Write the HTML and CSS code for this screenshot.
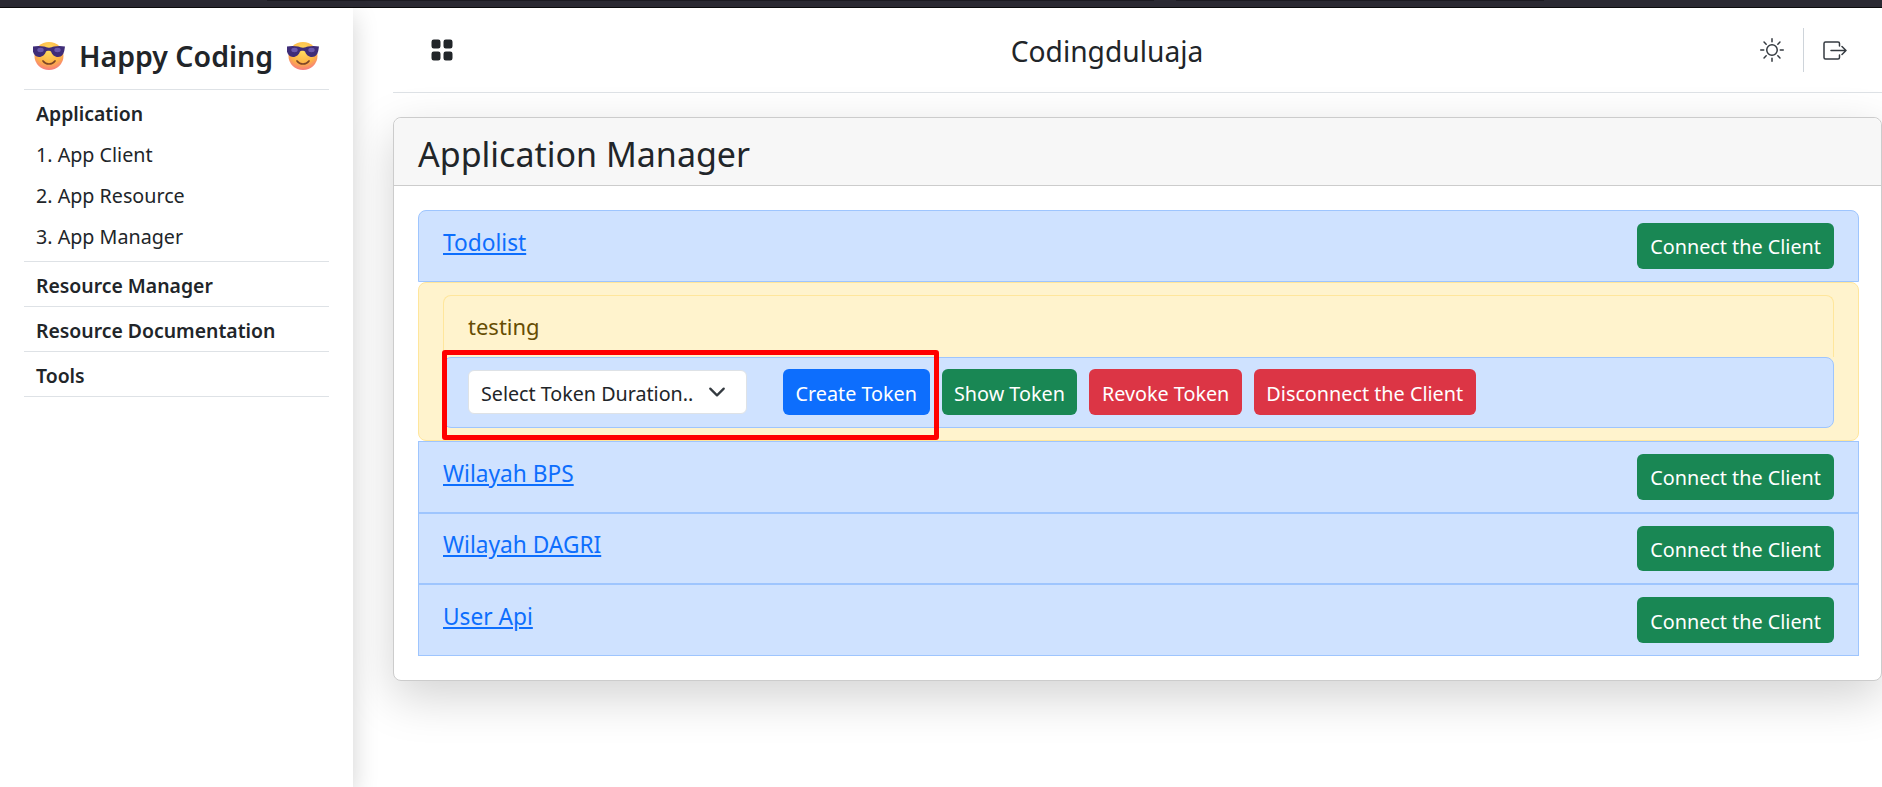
FILE: index.html
```html
<!DOCTYPE html>
<html lang="en">

<head>
    <meta charset="UTF-8">
    <title>Codingduluaja</title>
    <link rel="stylesheet" href="styles.css">
</head>

<body>
    <svg class="svg-defs" width="0" height="0">
        <defs>
            <radialGradient id="face-fill" cx="50%" cy="30%" r="75%">
                <stop offset="0" stop-color="#ffdf60"/>
                <stop offset="0.62" stop-color="#fdb245"/>
                <stop offset="1" stop-color="#f56f8c"/>
            </radialGradient>
            <symbol id="cool-face" viewBox="0 0 32 29">
                <ellipse cx="16" cy="15" rx="14.500" ry="14" fill="url(#face-fill)"/>
                <path d="M0 5.500c3-.8 8-.8 11 0 1.500.4 3 1.200 5 1.200s3.500-.8 5-1.200c3-.8 8-.8 11 0l-.5 3c-.5 4-2.500 7.500-6.500 7.500-3.500 0-6-2.500-7-5.500-.6-1-4.400-1-5 0-1 3-3.500 5.500-7 5.500-4 0-6-3.500-6.500-7.500z" fill="#3f2d78"/>
                <ellipse cx="7.500" cy="9" rx="3.200" ry="2.200" fill="#6a58ac"/>
                <ellipse cx="24.500" cy="9" rx="3.200" ry="2.200" fill="#6a58ac"/>
                <path d="M10 20c1.500 2 3.800 3 6 3s4.500-1 6-3" fill="none" stroke="#7d4526" stroke-width="1.700" stroke-linecap="round"/>
            </symbol>
        </defs>
    </svg>

    <div class="browser-strip">
        <span class="strip-tab strip-tab-long"></span>
        <span class="strip-tab strip-tab-short"></span>
    </div>

    <div class="layout">
        <aside class="sidebar">
            <div class="brand">
                <svg class="brand-emoji"><use href="#cool-face"/></svg>
                <span>Happy Coding</span>
                <svg class="brand-emoji"><use href="#cool-face"/></svg>
            </div>
            <nav>
                <div class="nav-group nav-group-open">
                    <a class="nav-title" href="#">Application</a>
                    <a class="nav-link" href="#">1. App Client</a>
                    <a class="nav-link" href="#">2. App Resource</a>
                    <a class="nav-link" href="#">3. App Manager</a>
                </div>
                <div class="nav-group"><a class="nav-title" href="#">Resource Manager</a></div>
                <div class="nav-group"><a class="nav-title" href="#">Resource Documentation</a></div>
                <div class="nav-group"><a class="nav-title" href="#">Tools</a></div>
            </nav>
        </aside>

        <main class="content">
            <header class="topbar">
                <svg class="icon-grid" viewBox="0 0 16 16" fill="#212529">
                    <path d="M1 2.500A1.500 1.500 0 0 1 2.500 1h3A1.500 1.500 0 0 1 7 2.500v3A1.500 1.500 0 0 1 5.500 7h-3A1.500 1.500 0 0 1 1 5.500zm8 0A1.500 1.500 0 0 1 10.500 1h3A1.500 1.500 0 0 1 15 2.500v3A1.500 1.500 0 0 1 13.500 7h-3A1.500 1.500 0 0 1 9 5.500zm-8 8A1.500 1.500 0 0 1 2.500 9h3A1.500 1.500 0 0 1 7 10.500v3A1.500 1.500 0 0 1 5.500 15h-3A1.500 1.500 0 0 1 1 13.500zm8 0A1.500 1.500 0 0 1 10.500 9h3a1.500 1.500 0 0 1 1.500 1.500v3a1.500 1.500 0 0 1-1.500 1.500h-3A1.500 1.500 0 0 1 9 13.500z"/>
                </svg>
                <div class="topbar-title">Codingduluaja</div>
                <div class="topbar-actions">
                    <svg class="icon-sun" viewBox="0 0 16 16" fill="#343a40">
                        <path d="M8 11a3 3 0 1 1 0-6 3 3 0 0 1 0 6m0 1a4 4 0 1 0 0-8 4 4 0 0 0 0 8M8 0a.500.500 0 0 1 .500.500v2a.500.500 0 0 1-1 0v-2A.500.500 0 0 1 8 0m0 13a.500.500 0 0 1 .500.500v2a.500.500 0 0 1-1 0v-2A.500.500 0 0 1 8 13m8-5a.500.500 0 0 1-.500.500h-2a.500.500 0 0 1 0-1h2a.500.500 0 0 1 .500.500M3 8a.500.500 0 0 1-.500.500h-2a.500.500 0 0 1 0-1h2A.500.500 0 0 1 3 8m10.657-5.657a.500.500 0 0 1 0 .707l-1.414 1.415a.500.500 0 1 1-.707-.708l1.414-1.414a.500.500 0 0 1 .707 0m-9.193 9.193a.500.500 0 0 1 0 .707L3.050 13.657a.500.500 0 0 1-.707-.707l1.414-1.414a.500.500 0 0 1 .707 0m9.193 2.121a.500.500 0 0 1-.707 0l-1.414-1.414a.500.500 0 0 1 .707-.707l1.414 1.414a.500.500 0 0 1 0 .707M4.464 4.465a.500.500 0 0 1-.707 0L2.343 3.050a.500.500 0 1 1 .707-.707l1.414 1.414a.500.500 0 0 1 0 .708"/>
                    </svg>
                    <span class="topbar-divider"></span>
                    <svg class="icon-logout" viewBox="0 0 24 19" fill="none" stroke="#343a40" stroke-width="1.500" stroke-linecap="round" stroke-linejoin="round">
                        <path d="M16.500 5V2.500A1.500 1.500 0 0 0 15 1H2.500A1.500 1.500 0 0 0 1 2.500v14A1.500 1.500 0 0 0 2.500 18H15a1.500 1.500 0 0 0 1.500-1.500V14M8 9.500h15M19 5.500l4 4-4 4"/>
                    </svg>
                </div>
            </header>

            <section class="card">
                <h2 class="card-header">Application Manager</h2>
                <div class="card-body">
                    <div class="app-row app-row-first">
                        <a href="#">Todolist</a>
                        <button class="btn btn-green">Connect the Client</button>
                    </div>

                    <div class="app-open">
                        <div class="app-open-name">testing</div>
                        <div class="app-open-actions">
                            <div class="token-select">
                                <span>Select Token Duration..</span>
                                <svg viewBox="0 0 16 16" fill="none" stroke="#343a40" stroke-width="2" stroke-linecap="round" stroke-linejoin="round"><path d="M2 5l6 6 6-6"/></svg>
                            </div>
                            <button class="btn btn-blue">Create Token</button>
                            <button class="btn btn-green">Show Token</button>
                            <button class="btn btn-red">Revoke Token</button>
                            <button class="btn btn-red">Disconnect the Client</button>
                        </div>
                        <div class="highlight-box"></div>
                    </div>

                    <div class="app-row">
                        <a href="#">Wilayah BPS</a>
                        <button class="btn btn-green">Connect the Client</button>
                    </div>
                    <div class="app-row">
                        <a href="#">Wilayah DAGRI</a>
                        <button class="btn btn-green">Connect the Client</button>
                    </div>
                    <div class="app-row">
                        <a href="#">User Api</a>
                        <button class="btn btn-green">Connect the Client</button>
                    </div>
                </div>
            </section>
        </main>
    </div>
</body>

</html>
```

FILE: styles.css
```css
:root {
    --text-color: #212529;
    --rule-color: #dee2e6;
    --blue-bg: #cfe2ff;
    --blue-border: #9ec5fe;
    --yellow-bg: #fff3cd;
    --yellow-border: #ffe69c;
}

* {
    margin: 0;
    padding: 0;
    box-sizing: border-box;
}

html,
body {
    height: 100%;
    overflow: hidden;
}

body {
    font-family: "Noto Sans", "Open Sans", sans-serif;
    font-size: 19.7px;
    color: var(--text-color);
    background-color: #fff;
    display: flex;
    flex-direction: column;
}

.svg-defs {
    position: absolute;
}

.browser-strip {
    height: 8px;
    flex: none;
    display: flex;
    align-items: flex-start;
    gap: 22px;
    padding-left: 267px;
    background-color: #2b2a33;
    border-bottom: 1px solid #0c0c0d;
}

.strip-tab {
    height: 1px;
    background-color: #1c1b22;
}

.strip-tab-long {
    width: 887px;
}

.strip-tab-short {
    width: 368px;
}

.layout {
    flex: 1;
    display: flex;
    min-height: 0;
}

/* sidebar */
.sidebar {
    width: 353px;
    flex: none;
    padding: 0 24px;
    background: #fff;
    box-shadow: 0 8px 24px rgba(0, 0, 0, 0.18);
    position: relative;
    z-index: 1;
}

.brand {
    height: 82px;
    padding: 14px 9px 0;
    display: flex;
    align-items: center;
    gap: 14px;
    font-size: 28.5px;
    font-weight: 600;
    white-space: nowrap;
    border-bottom: 1px solid var(--rule-color);
}

.brand-emoji {
    width: 32px;
    height: 29px;
    flex: none;
}

.nav-group {
    padding: 0 12px;
    border-bottom: 1px solid var(--rule-color);
    display: flex;
    flex-direction: column;
}

.nav-group-open {
    padding-bottom: 4px;
}

.nav-group a {
    color: var(--text-color);
    text-decoration: none;
}

.nav-title {
    font-size: 19.4px;
    font-weight: 600;
    height: 44px;
    line-height: 47px;
}

.nav-link {
    height: 41px;
    line-height: 42px;
}

/* main */
.content {
    flex: 1;
    min-width: 0;
    padding-left: 40px;
}

.topbar {
    height: 85px;
    display: flex;
    align-items: center;
    padding: 0 35px 0 37px;
    border-bottom: 1px solid var(--rule-color);
}

.icon-grid {
    width: 24px;
    height: 24px;
}

.topbar-title {
    flex: 1;
    text-align: center;
    font-size: 28.2px;
    line-height: 1;
    padding-top: 2px;
}

.topbar-actions {
    display: flex;
    align-items: center;
}

.icon-sun {
    width: 24px;
    height: 24px;
}

.topbar-divider {
    width: 1px;
    height: 44px;
    margin: 0 19px;
    background-color: #ced4da;
}

.icon-logout {
    width: 24px;
    height: 19px;
}

.card {
    margin-top: 24px;
    border: 1px solid #ccc;
    border-radius: 8px;
    box-shadow: 0 16px 48px rgba(0, 0, 0, 0.175);
    background: #fff;
}

.card-header {
    height: 68px;
    padding: 4px 24px 0;
    font-size: 34px;
    font-weight: 400;
    line-height: 65px;
    background-color: #f7f7f7;
    border-bottom: 1px solid #ccc;
    border-radius: 8px 8px 0 0;
}

.card-body {
    padding: 24px 0 24px 24px;
    margin-right: 22px;
}

.app-row {
    height: 71.67px;
    padding: 0 24px;
    display: flex;
    align-items: center;
    justify-content: space-between;
    background-color: var(--blue-bg);
    border: 1px solid var(--blue-border);
    font-size: 22.7px;
}

.app-row-first {
    border-radius: 8px 8px 0 0;
}

.app-row a {
    color: #0d6efd;
    margin-top: -7px;
}

.app-row .btn {
    padding: 2px 13px 0;
}

.app-open {
    position: relative;
    height: 159.33px;
    padding: 12px 24px;
    background-color: var(--yellow-bg);
    border: 1px solid var(--yellow-border);
    border-radius: 8px;
}

.app-open-name {
    height: 62px;
    padding: 15px 24px 0;
    font-size: 22px;
    color: #664d03;
    border: 1px solid var(--yellow-border);
    border-bottom: none;
    border-radius: 8px 8px 0 0;
}

.app-open-actions {
    height: 71px;
    padding: 0 24px;
    display: flex;
    align-items: center;
    gap: 12px;
    background-color: var(--blue-bg);
    border: 1px solid var(--blue-border);
    border-radius: 8px;
}

.token-select {
    width: 279px;
    height: 44px;
    margin-right: 24px;
    padding: 2px 20px 0 12px;
    display: flex;
    align-items: center;
    justify-content: space-between;
    white-space: nowrap;
    background-color: #fff;
    border: 1px solid #dee2e6;
    border-radius: 6px;
}

.token-select svg {
    width: 18px;
    height: 18px;
    flex: none;
    margin-top: -2px;
}

.btn {
    height: 45.67px;
    padding: 2px 12.5px 0;
    color: #fff;
    border: none;
    border-radius: 6px;
    font-family: inherit;
    font-size: 19.8px;
    white-space: nowrap;
    cursor: pointer;
}

.btn-green {
    background-color: #198754;
}

.btn-blue {
    background-color: #0d6efd;
}

.btn-red {
    background-color: #dc3545;
}

/* red box drawn over the screenshot */
.highlight-box {
    position: absolute;
    left: 23px;
    top: 67px;
    width: 497px;
    height: 90px;
    border: 5px solid #f00;
    border-radius: 3px;
    pointer-events: none;
}
```
